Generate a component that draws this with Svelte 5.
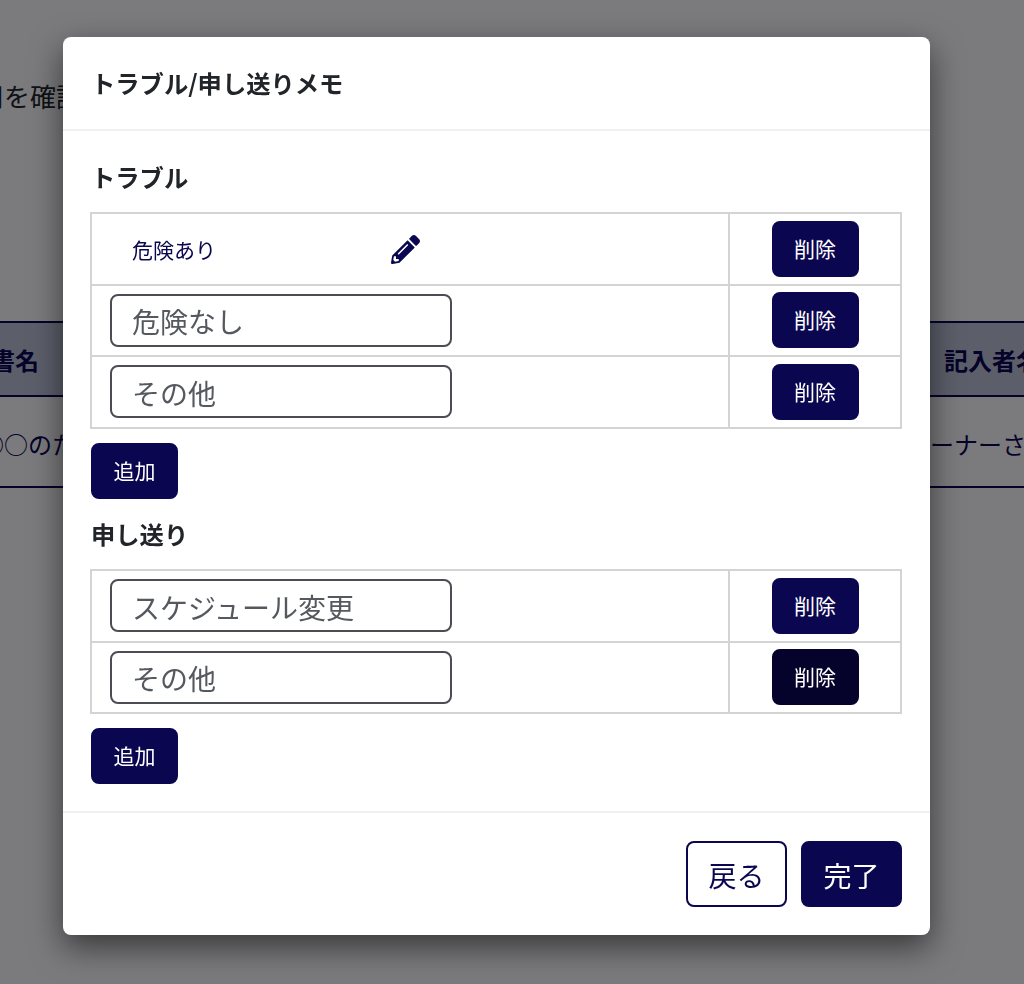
<script>
  const trouble = [
    { label: '危険あり', fixed: true },
    { label: '危険なし' },
    { label: 'その他' },
  ]
  const handover = [{ label: 'スケジュール変更' }, { label: 'その他', hover: true }]
  const sections = [
    { title: 'トラブル', rows: trouble },
    { title: '申し送り', rows: handover },
  ]
</script>

<div class="page">
  <p class="lead">ご利用を確認してください</p>
  <div class="list-head">
    <div class="cell-left"><span>報告書名</span></div>
    <div class="cell-right"><span>記入者名</span></div>
  </div>
  <div class="list-row">
    <div class="cell-left"><span>○○のため</span></div>
    <div class="cell-right"><span>ーナーさん</span></div>
  </div>
</div>

<div class="backdrop">
  <div class="modal">
    <header class="modal-header">
      <h2>トラブル/申し送りメモ</h2>
    </header>
    <div class="modal-body">
      {#each sections as section}
        <h3>{section.title}</h3>
        <table>
          <tbody>
            {#each section.rows as row}
              <tr>
                <td class="name">
                  {#if row.fixed}
                    <div class="fixed">
                      <span>{row.label}</span>
                      <svg viewBox="0 0 512 512" width="29" height="29" aria-hidden="true">
                        <path
                          fill="currentColor"
                          d="M497.9 142.1l-46.1 46.1c-4.7 4.7-12.3 4.7-17 0l-111-111c-4.7-4.7-4.7-12.3 0-17l46.1-46.1c18.7-18.7 49.1-18.7 67.9 0l60.1 60.1c18.8 18.7 18.8 49.1 0 67.9zM284.2 99.8L21.6 362.4.4 483.9c-2.9 16.4 11.4 30.6 27.8 27.8l121.5-21.3 262.6-262.6c4.7-4.7 4.7-12.3 0-17l-111-111c-4.8-4.7-12.4-4.7-17.1 0zM124.1 339.9c-5.5-5.5-5.5-14.3 0-19.8l154-154c5.5-5.5 14.3-5.5 19.8 0s5.5 14.3 0 19.8l-154 154c-5.5 5.5-14.3 5.5-19.8 0zM88 424h48v36.3l-64.5 11.3-31.1-31.1L51.7 376H88v48z"
                        />
                      </svg>
                    </div>
                  {:else}
                    <input type="text" value={row.label} />
                  {/if}
                </td>
                <td class="action">
                  <button class="btn small" class:hover={row.hover}>削除</button>
                </td>
              </tr>
            {/each}
          </tbody>
        </table>
        <button class="btn small add">追加</button>
      {/each}
    </div>
    <footer class="modal-footer">
      <button class="btn large outline">戻る</button>
      <button class="btn large">完了</button>
    </footer>
  </div>
</div>

<style>
  :global(body) {
    font-family: 'Noto Sans CJK JP', 'Noto Sans', sans-serif;
    color: #212529;
    background: #fff;
    overflow: hidden;
  }

  .page {
    height: 984px;
    overflow: hidden;
    padding-top: 77px;
    box-sizing: border-box;
  }

  .lead {
    margin: 0 0 0 -74px;
    font-size: 26px;
    line-height: 38px;
    white-space: nowrap;
  }

  .list-head,
  .list-row {
    display: flex;
    justify-content: space-between;
    color: #0a0650;
    border-bottom: 2px solid #0a0650;
    white-space: nowrap;
  }

  .list-head {
    margin-top: 206px;
    height: 72px;
    align-items: center;
    border-top: 2px solid #0a0650;
    background: #bfc5d8;
    font-size: 24px;
    font-weight: 700;
  }

  .list-row {
    height: 91px;
    align-items: center;
    padding-top: 4px;
    box-sizing: border-box;
    font-size: 24px;
  }

  .cell-left {
    flex: none;
    display: flex;
    justify-content: flex-end;
    overflow: hidden;
    margin-left: -100px;
    width: 139px;
  }

  .list-row .cell-left {
    width: 200px;
  }

  .cell-right {
    width: 80px;
    flex: none;
    overflow: hidden;
  }

  .list-row .cell-right {
    width: 94px;
  }

  .backdrop {
    position: fixed;
    inset: 0;
    background: rgba(1, 2, 6, 0.52);
    padding: 37px 0 0 63px;
  }

  .modal {
    width: 867px;
    height: 898px;
    display: flex;
    flex-direction: column;
    background: #fff;
    border-radius: 8px;
    box-shadow: 0 12px 32px rgba(0, 0, 0, 0.55);
  }

  .modal-header {
    height: 92px;
    flex: none;
    display: flex;
    align-items: center;
    padding: 0 28px;
    border-bottom: 2px solid #eef0f3;
    box-sizing: content-box;
  }

  h2,
  h3 {
    margin: 0;
    font-size: 24.3px;
    font-weight: 700;
    line-height: 36px;
  }

  .modal-body {
    flex: 1;
    padding: 28px 28px 0;
  }

  h3 {
    margin-bottom: 17px;
  }

  table {
    width: 812px;
    margin-left: -1px;
    border-collapse: collapse;
    table-layout: fixed;
  }

  td {
    border: 2px solid #d4d4d4;
    height: 71.5px;
    padding: 0;
    box-sizing: border-box;
  }

  .name {
    width: 638px;
    padding-left: 18px;
  }

  .fixed {
    width: 288px;
    padding-left: 22px;
    display: flex;
    align-items: center;
    justify-content: space-between;
    color: #0a0650;
    font-size: 21px;
  }

  .fixed svg {
    margin-top: 2px;
  }

  input {
    display: block;
    width: 342px;
    height: 53px;
    box-sizing: border-box;
    padding: 2px 20px 0;
    border: 2px solid #4a4d52;
    border-radius: 8px;
    background: #fff;
    color: #55595f;
    font-family: inherit;
    font-size: 28px;
    outline: none;
  }

  .action {
    text-align: center;
  }

  .btn {
    border: 2px solid #0a0650;
    border-radius: 8px;
    background: #0a0650;
    color: #fff;
    font-family: inherit;
    padding: 0;
    cursor: pointer;
  }

  .small {
    width: 87px;
    height: 56px;
    padding-bottom: 2px;
    font-size: 21px;
  }

  .hover {
    background: #05032c;
    border-color: #05032c;
  }

  .add {
    display: block;
    margin: 14px 0 17.5px;
  }

  .modal-footer {
    height: 124px;
    flex: none;
    display: flex;
    justify-content: flex-end;
    align-items: flex-start;
    gap: 14px;
    padding: 28px 28px 0;
    box-sizing: border-box;
    border-top: 2px solid #eef0f3;
  }

  .large {
    width: 101px;
    height: 66px;
    padding-top: 2px;
    font-size: 28px;
  }

  .outline {
    background: #fff;
    color: #0a0650;
  }
</style>
